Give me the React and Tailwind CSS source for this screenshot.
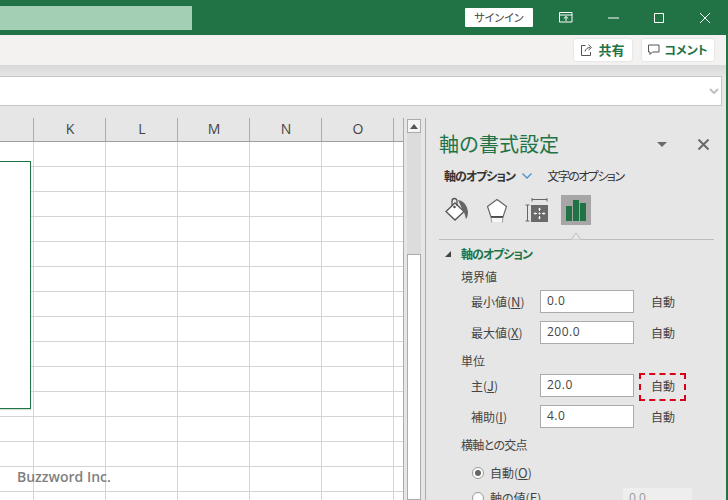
const cols = ["", "K", "L", "M", "N", "O", ""];
const rows = Array.from({ length: 15 });
const jp = "[font-family:'Noto_Sans_CJK_JP','Noto_Sans',sans-serif] [font-feature-settings:'palt']";

const WindowIcons = () => (
  <div className="flex items-center text-white">
    <svg width="14" height="11" viewBox="0 0 14 11" fill="none" stroke="currentColor" className="ml-[26px]">
      <path d="M.5.5h12.500v9.500H.5zM.5 3h12.500M7 9V4.500M4.800 6.500 7 4.500l2.200 2" />
    </svg>
    <svg width="11" height="2" viewBox="0 0 11 2" fill="none" stroke="currentColor" className="ml-[35px]">
      <path d="M0 1h11" />
    </svg>
    <svg width="10" height="10" viewBox="0 0 10 10" fill="none" stroke="currentColor" className="ml-[35px]">
      <path d="M.5.5h9v9h-9z" />
    </svg>
    <svg width="10" height="10" viewBox="0 0 10 10" fill="none" stroke="currentColor" className="ml-[36px]">
      <path d="m0 0 10 10M10 0 0 10" />
    </svg>
  </div>
);

const Sheet = () => (
  <div className="relative w-[404px] shrink-0 overflow-hidden bg-white border-r border-[#ababab]">
    <div className="grid grid-cols-[34px_repeat(5,72px)_9px] h-[24px] bg-[#e6e6e6] border-b border-b-[#9e9e9e]">
      {cols.map((c, i) => (
        <div key={i} className="flex items-end justify-center pb-[3px] relative text-[14px] leading-[18px] text-[#444] font-['Open_Sans']">
          {c}
          {i < 6 && <span className="absolute right-0 bottom-0 h-[23px] w-px bg-[#ababab]" />}
        </div>
      ))}
    </div>
    <div className="grid grid-cols-[34px_repeat(5,72px)_9px] auto-rows-[25px]">
      {rows.map((_, r) =>
        cols.map((c, i) => (
          <div key={r + "-" + i} className={i < 6 ? "border-r border-b border-[#d4d4d4]" : "border-b border-[#d4d4d4]"} />
        ))
      )}
    </div>
    <div className="absolute left-[-2px] top-[43px] w-[33px] h-[248px] bg-white border border-[#217346] shadow-[0_1px_1px_#cfe3d8]" />
    <div className="absolute left-[17px] top-[350px] text-[14px] leading-[18px] font-semibold text-[#808080] font-['Open_Sans']">
      Buzzword Inc.
    </div>
  </div>
);

const Scroll = () => (
  <div className="w-[18px] shrink-0 ml-[3px] flex">
    <div className="w-[14px] mt-px bg-[#dcdcdc] flex flex-col">
      <div className="h-[14px] bg-[#f4f4f4] border border-[#ababab] flex items-center justify-center">
        <svg width="8" height="5" viewBox="0 0 8 5"><path d="M4 0 8 5H0z" fill="#555" /></svg>
      </div>
      <div className="flex-1 mt-[121px] bg-white border border-[#ababab]" />
    </div>
  </div>
);

const Field = ({ label, letter, value, top }) => (
  <div className={`flex items-center h-[23px] ${top}`}>
    <span className="w-[79px] pl-[10px] text-[12px] text-[#444] whitespace-nowrap">
      {label}(<span className="underline text-[13px]">{letter}</span>)
    </span>
    <div className="w-[94px] h-[23px] bg-white border border-[#ababab] pl-[6px] text-[12px] leading-[20px] text-[#444] font-['Open_Sans'] tracking-[0.5px]">
      {value}
    </div>
    <span className="ml-[17px] text-[12px] text-[#444]">自動</span>
  </div>
);

const Panel = () => (
  <div className={`flex-1 relative border-l border-[#ababab] pl-[13px] pr-[12px] bg-[#e6e6e6] ${jp}`}>
    <div className="flex items-center h-[34px] mt-[9px]">
      <span className="text-[20px] leading-[26px] text-[#217346] [font-feature-settings:normal]">軸の書式設定</span>
      <svg width="10" height="5" viewBox="0 0 10 5" className="ml-[98px]"><path d="M0 0h10L5 5z" fill="#6a6a6a" /></svg>
      <svg width="11" height="11" viewBox="0 0 11 11" fill="none" stroke="#6a6a6a" strokeWidth="2" className="ml-[31px]"><path d="m.5.500 10 10M10.500.5l-10 10" /></svg>
    </div>
    <div className="flex items-center h-[20px] mt-[5px] pl-[5px] text-[12px] text-[#333]">
      <span className="font-bold tracking-[-1px]">軸のオプション</span>
      <svg width="10" height="6" viewBox="0 0 10 6" fill="none" stroke="#4a90c8" strokeWidth="1.300" className="ml-[7px]"><path d="m.5.500 4.500 4.500L9.500.5" /></svg>
      <span className="ml-[15px] tracking-[-1.500px]">文字のオプション</span>
    </div>
    <div className="flex items-center h-[30px] mt-[9px] pl-[5px]">
      <svg width="25" height="26" viewBox="0 0 25 26">
        <path d="M11 6 20 14.500 11 23 2 14.500z" fill="#fff" stroke="#555" strokeWidth="1.300" />
        <path d="M8 9V4a2.500 2.500 0 0 1 5 0v5" fill="none" stroke="#555" strokeWidth="1.300" />
        <circle cx="10.500" cy="10" r="1.300" fill="#555" />
        <path d="M14 3c6 1 9 5 10 12 0 3-1 6-2 7-1-3-1-6-3-8z" fill="#666" />
      </svg>
      <svg width="22" height="25" viewBox="0 0 22 25" fill="none" className="ml-[17px]">
        <path d="M11 1.500 20.500 8.500 17 19H5L1.500 8.500z" fill="#fff" stroke="#666" strokeWidth="1.200" />
        <path d="M5 19h12L16.500 24h-11z" fill="#f6f6f6" />
        <path d="M5 19h12" stroke="#333" strokeWidth="1.600" />
        <path d="M5 19.500l.7 5M17 19.500l-.7 5" stroke="#999" />
      </svg>
      <svg width="23" height="24" viewBox="0 0 23 24" fill="none" className="ml-[17px]">
        <path d="M7 1.500h15M7 0v3.500M22 0v3.500M.5 7h4M.5 23h4M2.500 7v16" stroke="#666" />
        <path d="M6 7h17v17H6z" fill="#6a6a6a" />
        <path d="M14.500 11v9M10 15.500h9" stroke="#fff" strokeDasharray="2 1.500" />
        <path d="M14.500 9.500l-1.500 2h3zM14.500 21.500l-1.500-2h3zM8.500 15.500l2-1.500v3zM20.500 15.500l-2-1.500v3z" fill="#fff" />
      </svg>
      <div className="ml-[13px] w-[30px] h-[30px] bg-[#a6a6a6] flex items-center justify-center">
        <svg width="20" height="21" viewBox="0 0 20 21" fill="#217346">
          <path d="M0 6h6v15H0zM7 0h6v21H7zM14 3h6v18h-6z" />
        </svg>
      </div>
    </div>
    <div className="relative h-px mt-[14px] bg-[#bdbdbd] w-[275px]">
      <svg width="14" height="8" viewBox="0 0 14 8" className="absolute left-[130px] top-[-7px]">
        <path d="M0 7.500h2L7 1l5 6.500h2" fill="#e6e6e6" stroke="#bdbdbd" />
      </svg>
    </div>
    <div className="flex items-center h-[18px] mt-[5px] pl-[6px]">
      <svg width="6" height="6" viewBox="0 0 6 6"><path d="M6 0v6H0z" fill="#444" /></svg>
      <span className="ml-[10px] text-[12px] font-bold text-[#217346] tracking-[-1px]">軸のオプション</span>
    </div>
    <div className="h-[18px] mt-[4px] pl-[22px] text-[12px] leading-[20px] text-[#444]">境界値</div>
    <div className="pl-[22px]">
      <Field label="最小値" letter="N" value="0.0" top="mt-[5px]" />
      <Field label="最大値" letter="X" value="200.0" top="mt-[8px]" />
    </div>
    <div className="h-[18px] mt-[7px] pl-[22px] text-[12px] leading-[20px] text-[#444]">単位</div>
    <div className="pl-[22px]">
      <Field label="主" letter="J" value="20.0" top="mt-[5px]" />
      <Field label="補助" letter="I" value="4.0" top="mt-[8px]" />
    </div>
    <div className="h-[18px] mt-[7px] pl-[22px] text-[12px] leading-[20px] text-[#444] tracking-[-0.7px]">横軸との交点</div>
    <div className="flex items-center h-[18px] mt-[11px] pl-[33px] text-[12px] text-[#444]">
      <span className="w-[12px] h-[12px] rounded-full bg-white border border-[#999] flex items-center justify-center">
        <span className="w-[6px] h-[6px] rounded-full bg-[#666]" />
      </span>
      <span className="ml-[6px]">自動(<span className="underline text-[13px]">O</span>)</span>
    </div>
    <div className="flex items-center h-[18px] mt-[7px] pl-[33px] text-[12px] text-[#444]">
      <span className="w-[12px] h-[12px] rounded-full bg-white border border-[#999]" />
      <span className="ml-[6px] w-[133px]">軸の値(<span className="underline text-[13px]">E</span>)</span>
      <div className="w-[69px] h-[23px] self-start mt-[-1px] bg-[#eeeeee] pl-[6px] text-[#999] font-['Open_Sans'] leading-[20px]">0.0</div>
    </div>
    <div className="absolute left-[213px] top-[255px] w-[47px] h-[28px] border-2 border-dashed border-[#d9001b]" />
  </div>
);

export default function App() {
  return (
    <div className={`w-[728px] h-[500px] overflow-hidden flex flex-col bg-[#e6e6e6] ${jp}`}>
      <div className="h-[35px] bg-[#217346] flex items-center shrink-0">
        <div className="w-[192px] h-[24px] bg-[#a3d0b5]" />
        <div className="ml-[273px] w-[68px] h-[19px] bg-white rounded-[1px] text-[11px] leading-[19px] text-center text-[#444]">サインイン</div>
        <WindowIcons />
      </div>
      <div className="flex-1 min-h-0 flex flex-col border-r-2 border-[#217346]">
        <div className="h-[30px] bg-[#f3f2f1] flex items-center justify-end pr-[12px] gap-[10px] shrink-0">
          <button className="w-[58px] h-[22px] bg-white rounded-[2px] shadow-[0_0_2px_#ccc] flex items-center justify-center gap-[5px] text-[13px] font-bold text-[#217346]">
            <svg width="12" height="12" viewBox="0 0 12 12" fill="none" stroke="#555">
              <path d="M4.500 1.500H.5v10h9V8M4 7.500c.5-2.500 2.500-4 5-4M7.500.8l3 2.700-3 2.500" />
            </svg>
            共有
          </button>
          <button className="w-[72px] h-[22px] bg-white rounded-[2px] shadow-[0_0_2px_#ccc] flex items-center justify-center gap-[4px] text-[12px] font-bold text-[#217346]">
            <svg width="12" height="12" viewBox="0 0 12 12" fill="none" stroke="#555">
              <path d="M.5 1h10.500v7H4.500L2 10.500V8H.5z" />
            </svg>
            コメント
          </button>
        </div>
        <div className="h-[11px] shrink-0 bg-gradient-to-b from-[#d8d8d8] to-[#e6e6e6]" />
        <div className="h-[30px] w-[722px] shrink-0 bg-white border border-[#c6c6c6] border-l-0 flex items-center justify-end pr-[2px]">
          <svg width="10" height="6" viewBox="0 0 10 6" fill="none" stroke="#c0c0c0" strokeWidth="2"><path d="m1 1 4 4 4-4" /></svg>
        </div>
        <div className="h-[12px] shrink-0" />
        <div className="flex-1 flex min-h-0">
          <Sheet />
          <Scroll />
          <Panel />
        </div>
      </div>
    </div>
  );
}
